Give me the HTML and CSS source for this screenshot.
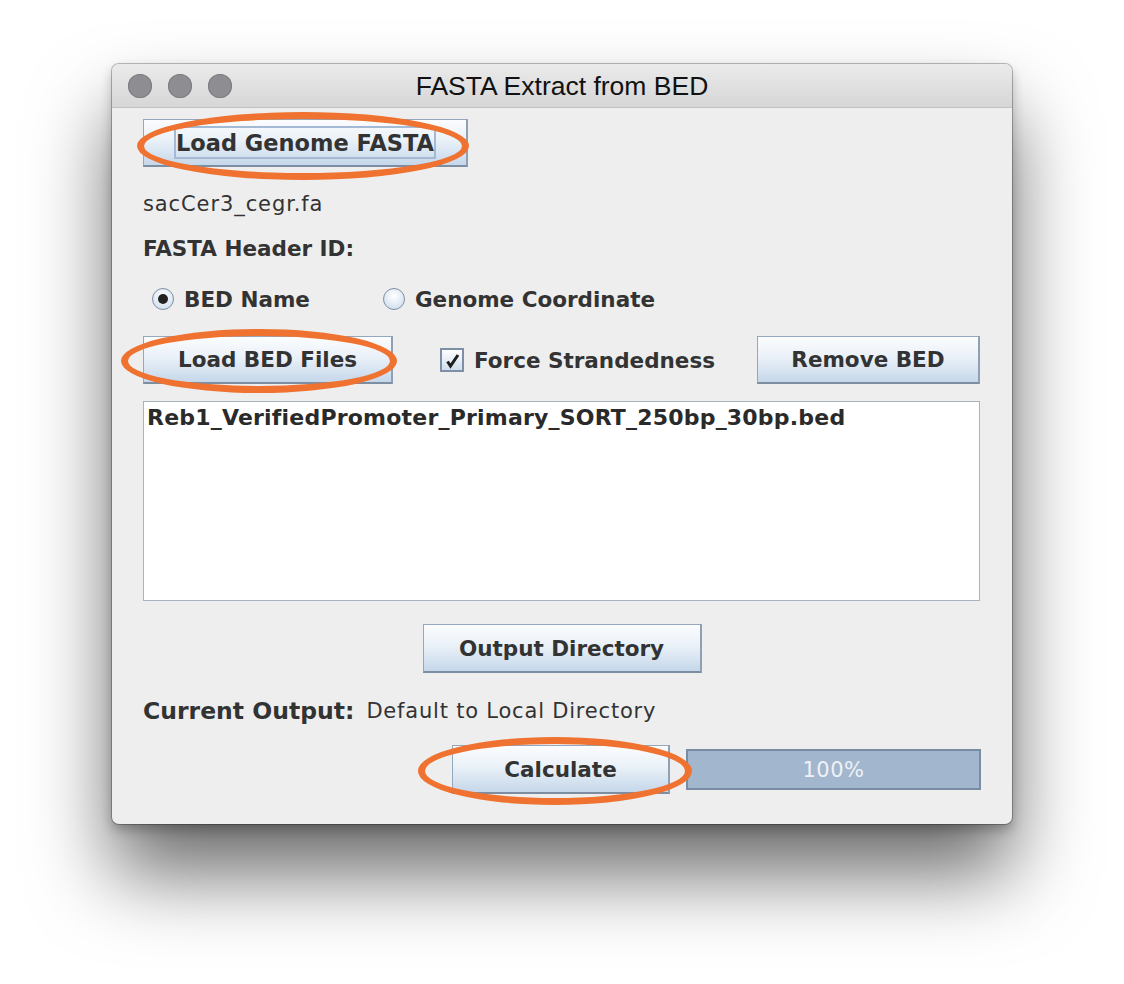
FILE: index.html
```html
<!DOCTYPE html>
<html>
<head>
<meta charset="utf-8">
<link rel="stylesheet" href="styles.css">
<title>FASTA Extract from BED</title>
</head>
<body>
<div class="window">
  <div class="titlebar">
    <div class="lights"><span class="light"></span><span class="light"></span><span class="light"></span></div>
    <div class="title">FASTA Extract from BED</div>
  </div>
  <div class="content">
    <div class="row r-genome">
      <div class="btnwrap">
        <button class="btn btn-genome"><span class="focus">Load Genome FASTA</span></button>
        <span class="ring ring-genome"></span>
      </div>
    </div>
    <div class="label r-file">sacCer3_cegr.fa</div>
    <div class="label bold r-header">FASTA Header ID:</div>
    <div class="row r-radio">
      <span class="radio on"></span><span class="bold rlabel1">BED Name</span>
      <span class="radio"></span><span class="bold">Genome Coordinate</span>
    </div>
    <div class="row r-bed">
      <div class="btnwrap">
        <button class="btn btn-bed">Load BED Files</button>
        <span class="ring ring-bed"></span>
      </div>
      <span class="check"><svg width="18" height="18" viewBox="0 0 18 18"><path d="M4.5 10.5 L7.5 15 L15 4" fill="none" stroke="#1e1e1e" stroke-width="3" stroke-linejoin="miter"/></svg></span>
      <span class="bold">Force Strandedness</span>
      <button class="btn btn-remove">Remove BED</button>
    </div>
    <div class="list"><div class="item">Reb1_VerifiedPromoter_Primary_SORT_250bp_30bp.bed</div></div>
    <div class="row r-out">
      <button class="btn btn-out">Output Directory</button>
    </div>
    <div class="row r-current">
      <span class="bold big">Current Output:</span><span class="cur">Default to Local Directory</span>
    </div>
    <div class="row r-calc">
      <div class="btnwrap">
        <button class="btn btn-calc">Calculate</button>
        <span class="ring ring-calc"></span>
      </div>
      <div class="progress">100%</div>
    </div>
  </div>
</div>
</body>
</html>
```
FILE: styles.css
```css
html, body { margin: 0; padding: 0; background: #fff; }
body {
  font-family: "DejaVu Sans", "Open Sans", sans-serif;
  color: #333;
  padding: 64px 0 0 112px;
  min-height: 984px;
  box-sizing: border-box;
}
.window {
  width: 900px;
  height: 760px;
  background: #eeeeee;
  border-radius: 7px;
  box-shadow: 0 0 0 1px rgba(0,0,0,0.25), 0 6px 12px rgba(0,0,0,0.25), 0 50px 80px rgba(0,0,0,0.58);
  overflow: hidden;
  display: flex;
  flex-direction: column;
}
.titlebar {
  height: 43px;
  flex: none;
  background: linear-gradient(#ebebeb, #d6d6d6);
  border-bottom: 1px solid #c2c2c2;
  position: relative;
  display: flex;
  align-items: center;
}
.lights { display: flex; gap: 16px; padding-left: 16px; }
.light {
  width: 24px; height: 24px; border-radius: 50%;
  background: #8e8d91;
  box-shadow: inset 0 0 0 1px #7e7d81;
}
.title {
  position: absolute; left: 0; right: 0; top: 0; bottom: 0;
  display: flex; align-items: center; justify-content: center;
  font-family: "Liberation Sans", Arial, sans-serif;
  font-size: 26.5px; color: #111;
  padding-top: 2px;
}
.content {
  padding: 0 31px;
  display: flex;
  flex-direction: column;
  font-size: 21px;
}
.label { letter-spacing: 0.9px; }
.bold { font-weight: bold; font-size: 21.5px; letter-spacing: 0; }
.bold.big { font-size: 23.5px; }
.row { display: flex; align-items: center; }
.btnwrap { position: relative; display: flex; }
.btn {
  font-family: "DejaVu Sans", sans-serif;
  font-weight: bold;
  font-size: 21.5px;
  color: #333;
  background: linear-gradient(#fbfcfe, #eaf1f8 45%, #c5d7ea);
  border: 1px solid #95a7bd;
  border-bottom: 2px solid #7d8ea3;
  border-right: 2px solid #8fa0b4;
  padding: 0;
  margin: 0;
  white-space: nowrap;
  display: flex; align-items: center; justify-content: center;
}
.ring {
  position: absolute;
  border: 7px solid #ef7230;
  border-radius: 50%;
  pointer-events: none;
}
.r-genome { margin-top: 11px; }
.btn-genome { width: 325px; height: 48px; }
.focus {
  border: 2px solid #a3b9d4;
  padding: 3px 0 2px;
  width: 262px;
  box-sizing: border-box;
  display: flex; justify-content: center;
  line-height: 24px;
  font-size: 22.5px;
  white-space: nowrap;
}
.ring-genome { left: -6px; top: -7px; width: 318px; height: 54px; }
.r-file { margin-top: 25px; height: 24px; line-height: 24px; }
.r-header { margin-top: 21px; height: 24px; line-height: 24px; }
.r-radio { margin-top: 24px; height: 28px; }
.radio {
  width: 20px; height: 20px; border-radius: 50%;
  border: 1px solid #7f8fa3;
  background: radial-gradient(circle at 50% 35%, #ffffff, #c9d9ea);
  margin-left: 9px; margin-right: 10px;
  position: relative;
}
.radio.on::after {
  content: ""; position: absolute; left: 5px; top: 5px;
  width: 10px; height: 10px; border-radius: 50%; background: #222;
}
.rlabel1 { margin-right: 64px; }
.r-bed { margin-top: 23px; height: 48px; align-items: stretch; }
.r-bed > .bold, .r-bed > .check { align-self: center; }
.btn-bed { width: 250px; height: 48px; }
.ring-bed { left: -22px; top: -7px; width: 262px; height: 50px; }
.check {
  margin-left: 47px; margin-right: 10px;
  width: 20px; height: 20px;
  border: 2px solid #7e90a8;
  background: linear-gradient(#ffffff, #d0deed);
  display: flex; align-items: center; justify-content: center;
}
.btn-remove { width: 223px; height: 48px; margin-left: auto; margin-right: 1px; }
.list {
  margin-top: 17px;
  height: 198px;
  background: #fff;
  border: 1px solid #a9b3c2;
  margin-right: 1px;
}
.item { font-weight: bold; font-size: 22px; letter-spacing: 0.2px; padding: 3px 0 0 3px; line-height: 26px; color: #2a2a2a; }
.r-out { margin-top: 23px; justify-content: center; }
.btn-out { width: 279px; height: 49px; margin-left: 0; }
.r-current { margin-top: 23px; height: 30px; }
.cur { margin-left: 12px; font-size: 21px; letter-spacing: 0.8px; }
.r-calc { margin-top: 19px; height: 49px; justify-content: flex-start; padding-left: 309px; align-items: center; }
.btn-calc { width: 218px; height: 49px; }
.ring-calc { left: -34px; top: -8px; width: 260px; height: 54px; }
.progress {
  margin-left: 16px;
  width: 293px; height: 37px;
  background: #a2b6cd;
  border: 2px solid #7a8ca4;
  color: #eef2f7;
  font-size: 21px;
  letter-spacing: 0.5px;
  display: flex; align-items: center; justify-content: center;
}
```
